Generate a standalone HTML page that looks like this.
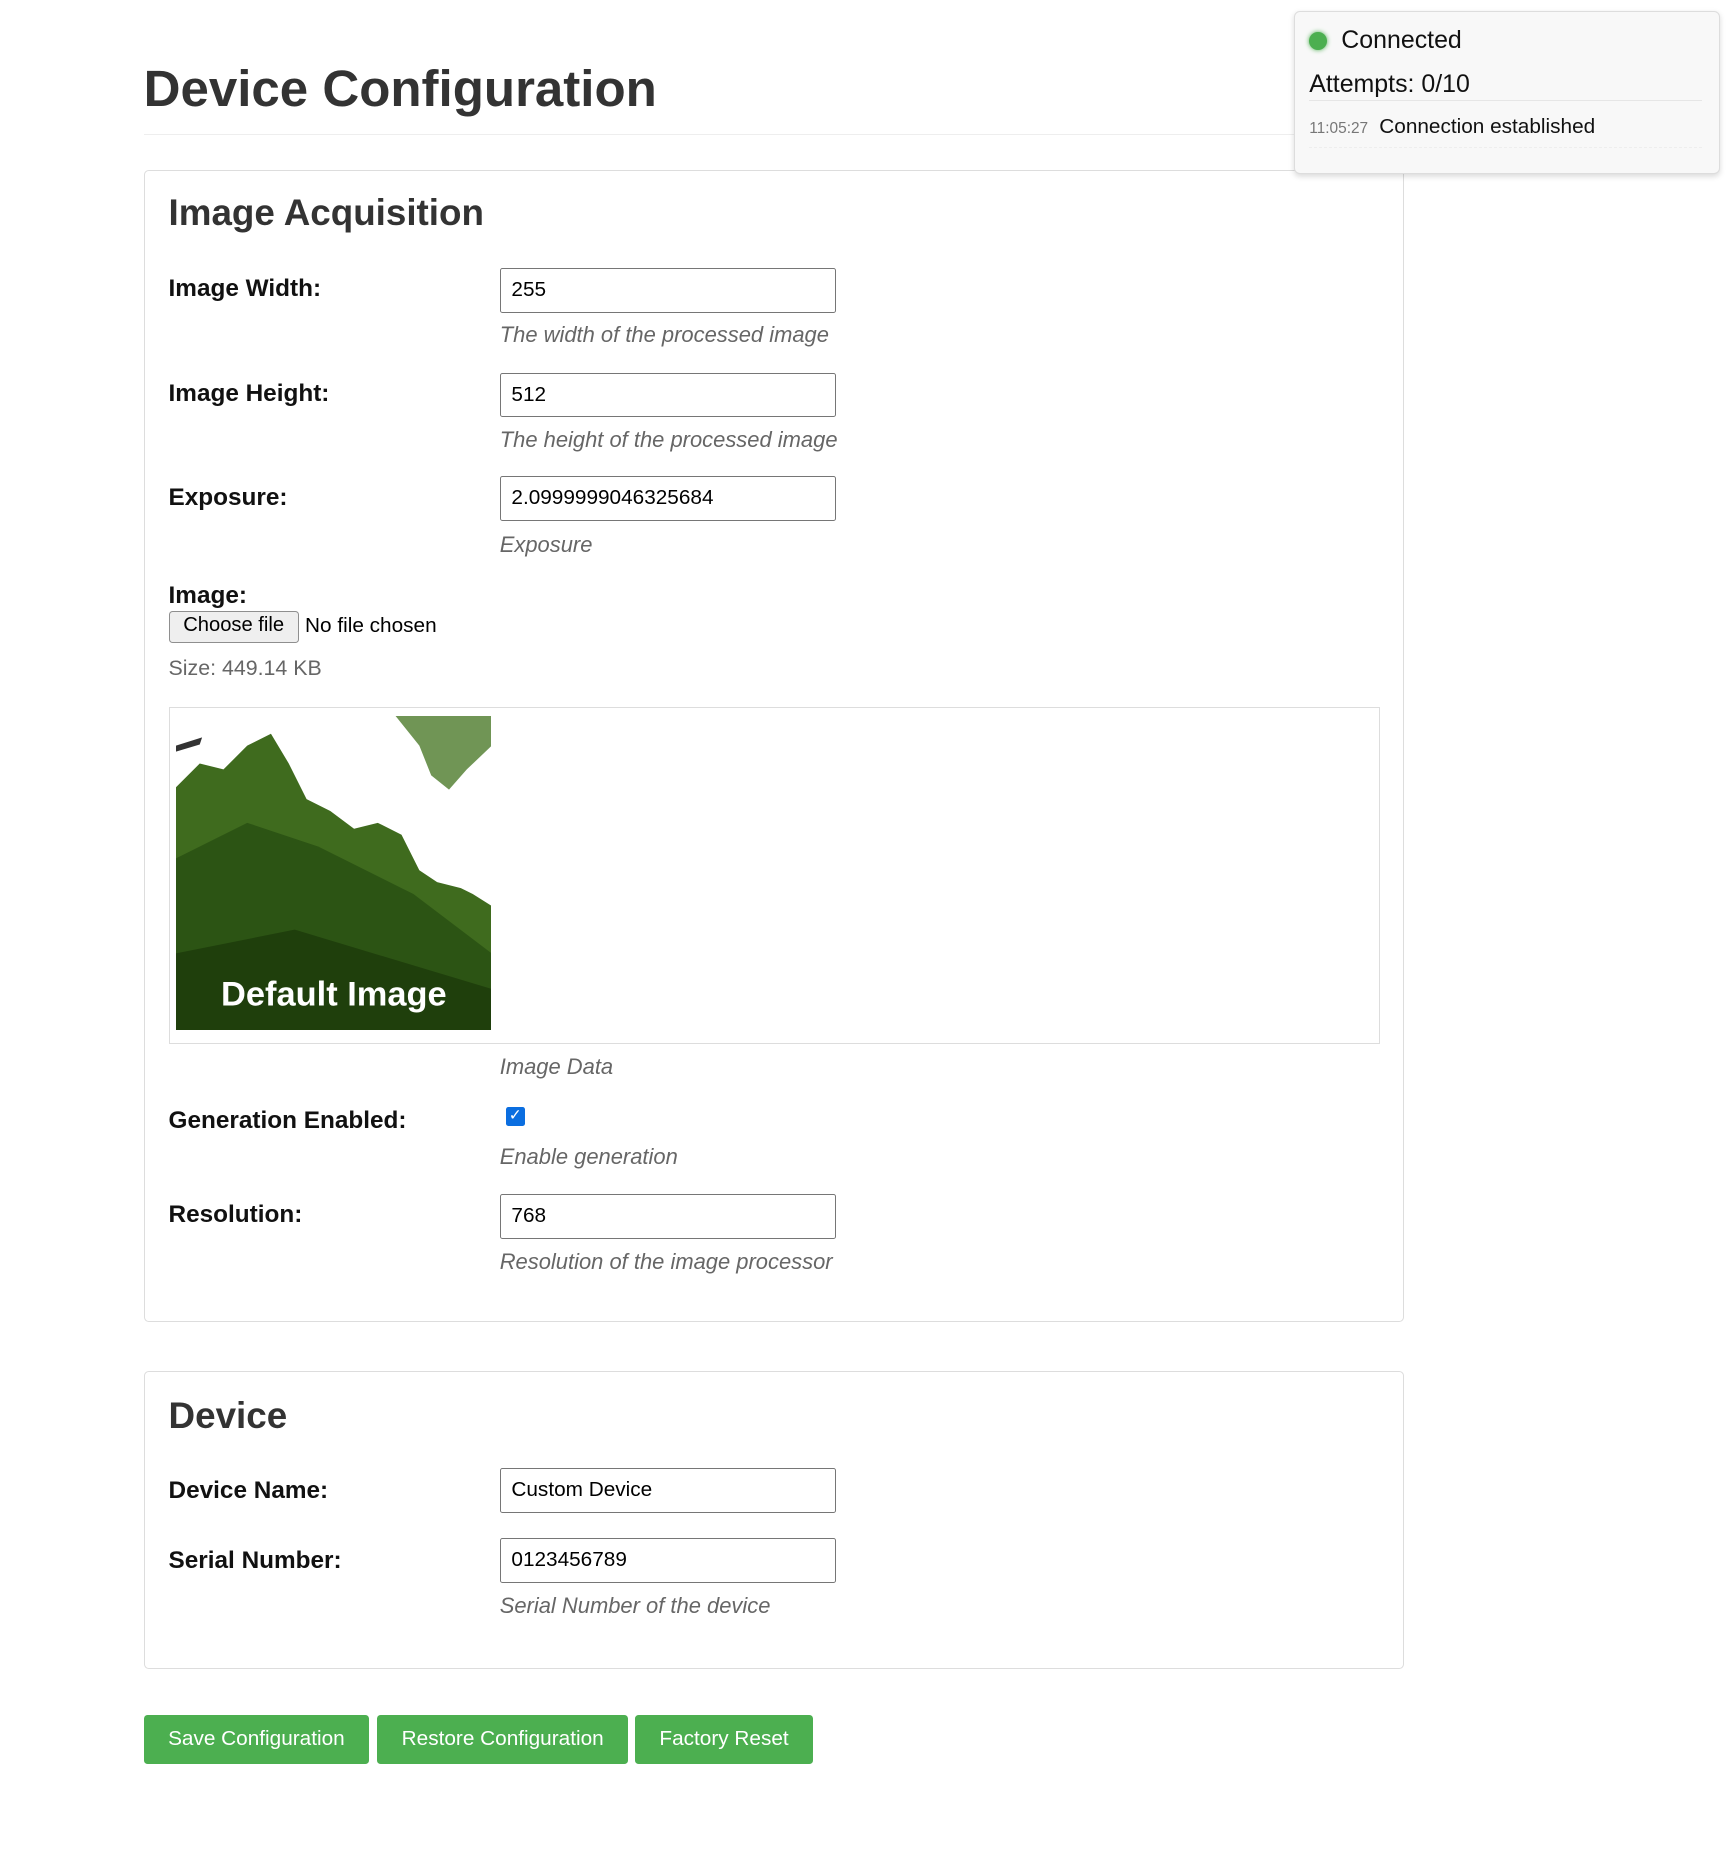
<!DOCTYPE html>
<html><head><meta charset="utf-8"><style>
html,body{margin:0;padding:0;background:#fff;}
body{width:1733px;height:1860px;overflow:hidden;font-family:"Liberation Sans",Arial,sans-serif;}
#w{zoom:1.187;position:relative;width:1460px;height:1567px;}
.a{position:absolute;}
h1{position:absolute;margin:0;left:121px;top:50px;font-size:43px;color:#333;font-weight:bold;}
.hr{position:absolute;left:121px;top:113px;width:1062px;height:1px;background:#eee;}
.sec{position:absolute;left:121px;width:1060px;border:1px solid #ddd;border-radius:4px;}
h2{position:absolute;margin:0;left:142px;font-size:31px;color:#333;font-weight:bold;}
.lbl{position:absolute;left:142px;font-size:20.5px;font-weight:bold;color:#111;}
.inp{position:absolute;left:421px;width:273px;height:36px;border:1px solid #767676;border-radius:2px;font-size:17.5px;line-height:36px;padding-left:9px;color:#000;}
.desc{position:absolute;left:421px;font-size:18.5px;font-style:italic;color:#666;}
.btn{position:absolute;top:1445px;height:41px;background:#4CAF50;color:#fff;font-size:17.5px;line-height:40px;text-align:center;border-radius:3px;}
</style></head><body><div id="w">
<h1>Device Configuration</h1>
<div class="hr"></div>

<div class="sec" style="top:143px;height:969px"></div>
<h2 style="top:162px">Image Acquisition</h2>
<div class="lbl" style="top:232px">Image Width:</div>
<div class="inp" style="top:226px">255</div>
<div class="desc" style="top:271px">The width of the processed image</div>
<div class="lbl" style="top:320px">Image Height:</div>
<div class="inp" style="top:314px">512</div>
<div class="desc" style="top:360px">The height of the processed image</div>
<div class="lbl" style="top:408px">Exposure:</div>
<div class="inp" style="top:401px">2.0999999046325684</div>
<div class="desc" style="top:448px">Exposure</div>
<div class="lbl" style="top:490px">Image:</div>
<div class="a" style="left:142px;top:515px;width:108px;height:25px;border:1px solid #8f8f8f;border-radius:3px;background:#efefef;font-size:17px;text-align:center;line-height:23px;">Choose file</div>
<div class="a" style="left:257px;top:517px;font-size:17.5px;">No file chosen</div>
<div class="a" style="left:142px;top:553px;font-size:18px;color:#666;">Size: 449.14 KB</div>
<div class="a" style="left:142px;top:596px;width:1019px;height:282px;border:1px solid #ddd;"></div>
<svg class="a" style="left:148px;top:603px" width="266" height="265" viewBox="0 0 266 265">
<rect width="266" height="265" fill="#fff"/>
<path d="M0 60 L20 40 L40 45 L60 25 L80 15 L95 40 L110 70 L130 80 L150 95 L170 90 L190 100 L205 130 L220 140 L240 145 L250 150 L266 160 L266 265 L0 265Z" fill="#3f6b1e"/>
<path d="M0 120 L60 90 L120 110 L200 150 L266 200 L266 265 L0 265Z" fill="#2c5414"/>
<path d="M0 200 L100 180 L266 230 L266 265 L0 265Z" fill="#1f3f0c"/>
<path d="M185 0 L266 0 L266 25 L245 45 L230 62 L215 50 L205 25Z" fill="#4c7a2a" opacity=".8"/>
<path d="M0 25 L22 18 L20 24 L0 30Z" fill="#333"/>
<text x="133" y="244" font-family="Liberation Sans,Arial,sans-serif" font-weight="bold" font-size="29" fill="#fff" text-anchor="middle">Default Image</text>
</svg>
<div class="desc" style="top:888px">Image Data</div>
<div class="lbl" style="top:933px">Generation Enabled:</div>
<div class="a" style="left:426px;top:933px;width:16px;height:16px;background:#0b6ee0;border-radius:2px;color:#fff;font-size:13px;line-height:16px;text-align:center;">✓</div>
<div class="desc" style="top:964px">Enable generation</div>
<div class="lbl" style="top:1012px">Resolution:</div>
<div class="inp" style="top:1006px">768</div>
<div class="desc" style="top:1052px">Resolution of the image processor</div>

<div class="sec" style="top:1155px;height:249px"></div>
<h2 style="top:1175px">Device</h2>
<div class="lbl" style="top:1244px">Device Name:</div>
<div class="inp" style="top:1237px">Custom Device</div>
<div class="lbl" style="top:1303px">Serial Number:</div>
<div class="inp" style="top:1296px">0123456789</div>
<div class="desc" style="top:1342px">Serial Number of the device</div>

<div class="btn" style="left:121px;width:190px">Save Configuration</div>
<div class="btn" style="left:318px;width:211px">Restore Configuration</div>
<div class="btn" style="left:535px;width:150px">Factory Reset</div>

<div class="a" style="left:1090px;top:9px;width:357px;height:136px;background:#f8f8f8;border:1px solid #ddd;border-radius:5px;box-shadow:0 2px 5px rgba(0,0,0,.15);"></div>
<div class="a" style="left:1103px;top:27px;width:15px;height:15px;border-radius:50%;background:#4CAF50;box-shadow:0 0 4px #4CAF50;"></div>
<div class="a" style="left:1130px;top:22px;font-size:21px;color:#111;">Connected</div>
<div class="a" style="left:1103px;top:59px;font-size:21px;color:#111;">Attempts: 0/10</div>
<div class="a" style="left:1103px;top:84px;width:331px;height:1px;background:#e6e6e6;"></div>
<div class="a" style="left:1103px;top:101px;font-size:13px;color:#777;">11:05:27</div>
<div class="a" style="left:1162px;top:97px;font-size:17.5px;color:#111;">Connection established</div>
<div class="a" style="left:1103px;top:124px;width:331px;border-top:1px dashed #eee;"></div>
</div></body></html>
